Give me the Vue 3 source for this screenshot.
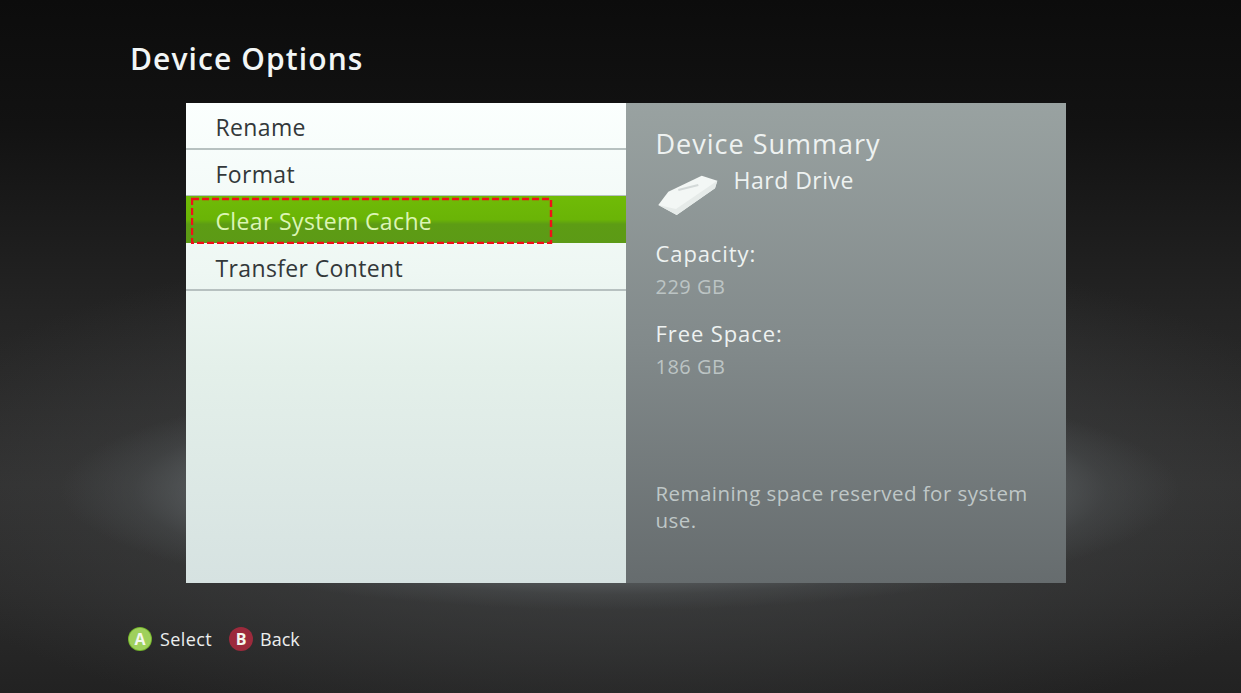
<script setup>
const menuItems = [
  { label: 'Rename' },
  { label: 'Format' },
  { label: 'Clear System Cache', active: true },
  { label: 'Transfer Content' },
];
</script>

<template>
  <div class="screen">
    <h1 class="title">Device Options</h1>

    <div class="panel">
      <ul class="menu">
        <li
          v-for="item in menuItems"
          :key="item.label"
          class="menu-item"
          :class="{ active: item.active }"
        >
          {{ item.label }}
          <svg v-if="item.active" class="highlight" width="362" height="47" viewBox="0 0 362 47">
            <rect x="1" y="2" width="359" height="44" fill="none" stroke="#f01019" stroke-width="2.4" stroke-dasharray="7 3" />
          </svg>
        </li>
      </ul>

      <div class="summary">
        <h2 class="summary-title">Device Summary</h2>
        <div class="device">
          <svg class="drive-icon" width="60" height="41" viewBox="0 0 60 41">
            <path d="M0.3 30 L10.3 16.7 L43.7 0.7 L59.3 5.7 L57 13.3 L18.7 40 Z" fill="#f3f7f5" />
            <path d="M0.3 30 L18.7 40 L57 13.3 L59.3 5.7 L18 34 Z" fill="#e6ebe9" />
            <path d="M20.3 15 L40.3 10" stroke="#d3d9d8" stroke-width="2" />
          </svg>
          <span class="device-name">Hard Drive</span>
        </div>
        <div class="stat-label capacity">Capacity:</div>
        <div class="stat-value">229 GB</div>
        <div class="stat-label free">Free Space:</div>
        <div class="stat-value">186 GB</div>
        <p class="note">Remaining space reserved for system use.</p>
      </div>
    </div>

    <div class="footer">
      <span class="btn-icon btn-a">A</span>
      <span class="btn-label">Select</span>
      <span class="btn-icon btn-b">B</span>
      <span class="btn-label back">Back</span>
    </div>
  </div>
</template>

<style scoped>
.screen {
  width: 1241px;
  height: 693px;
  overflow: hidden;
  box-sizing: border-box;
  padding-top: 39px;
  font-family: "Open Sans", "Noto Sans", sans-serif;
  background:
    radial-gradient(ellipse 560px 120px at 620px 490px, rgba(132, 140, 143, 0.85) 0%, rgba(112, 118, 121, 0.72) 65%, rgba(80, 84, 86, 0.35) 87%, rgba(60, 62, 63, 0) 100%),
    radial-gradient(ellipse 760px 260px at 620px 490px, rgba(70, 72, 73, 0.9) 0%, rgba(50, 51, 52, 0) 100%),
    linear-gradient(#0c0c0c 0%, #121212 18%, #242424 45%, #303030 70%, #2b2b2b 85%, #222222 100%);
}
.title {
  margin: 0 0 0 130px;
  height: 64px;
  font-size: 30px;
  line-height: 40px;
  font-weight: 600;
  letter-spacing: 1.1px;
  color: #f2f6f6;
}
.panel {
  display: flex;
  width: 880px;
  height: 480px;
  margin-left: 186px;
}
.menu {
  width: 440px;
  margin: 0;
  padding: 0;
  list-style: none;
  background: linear-gradient(#fbfffe 0%, #eef7f3 35%, #e4f0ea 55%, #d6e2e1 100%);
}
.menu-item {
  position: relative;
  box-sizing: border-box;
  height: 47px;
  padding-left: 29.5px;
  font-size: 23px;
  line-height: 49px;
  letter-spacing: 0.36px;
  color: #33383a;
  border-bottom: 2px solid #b7c1c0;
}
.menu-item.active {
  margin: -1px 0 1px;
  color: #dcf5b4;
  line-height: 51px;
  border-bottom: 0;
  background: linear-gradient(#70bb07 0%, #6ab406 50%, #5d9c14 60%, #5c9a16 100%);
}
.highlight {
  position: absolute;
  left: 5px;
  top: 1px;
}
.summary {
  flex: 1;
  box-sizing: border-box;
  padding: 22px 30px 0 29.5px;
  color: #eef2f1;
  background: linear-gradient(#99a2a1 0%, #828a8b 50%, #666c6e 100%);
}
.summary-title {
  margin: 0;
  font-size: 27px;
  line-height: 38px;
  font-weight: 400;
  letter-spacing: 1px;
}
.device {
  display: flex;
  align-items: flex-start;
  gap: 16px;
  height: 62px;
}
.drive-icon {
  margin: 12px 0 0 2px;
}
.device-name {
  font-size: 23px;
  line-height: 34px;
  letter-spacing: 0.5px;
}
.stat-label {
  font-size: 22px;
  line-height: 32px;
  letter-spacing: 0.9px;
}
.capacity {
  margin-top: 12px;
}
.free {
  margin-top: 14px;
}
.stat-value {
  margin-top: 2px;
  font-size: 20px;
  line-height: 32px;
  letter-spacing: 0.5px;
  color: #bcc4c4;
}
.note {
  margin: 97px 0 0;
  font-size: 20.5px;
  line-height: 27px;
  letter-spacing: 0.45px;
  color: #bfc7c7;
}
.footer {
  display: flex;
  align-items: center;
  height: 26px;
  margin: 43px 0 0 128px;
}
.btn-icon {
  width: 24px;
  height: 24px;
  margin-right: 8px;
  border-radius: 50%;
  text-align: center;
  font-size: 16px;
  line-height: 24px;
  font-weight: 700;
  color: #f4f8ee;
}
.btn-a {
  background: radial-gradient(circle, #9fd05c 0%, #9fd05c 62%, #74b52a 68%, #6fae26 100%);
}
.btn-b {
  margin-left: 17px;
  margin-right: 7px;
  background: #9c2a3c;
}
.btn-label {
  font-size: 18px;
  line-height: 26px;
  letter-spacing: 0.4px;
  color: #eceeee;
}
.back {
  letter-spacing: 0;
}
</style>
